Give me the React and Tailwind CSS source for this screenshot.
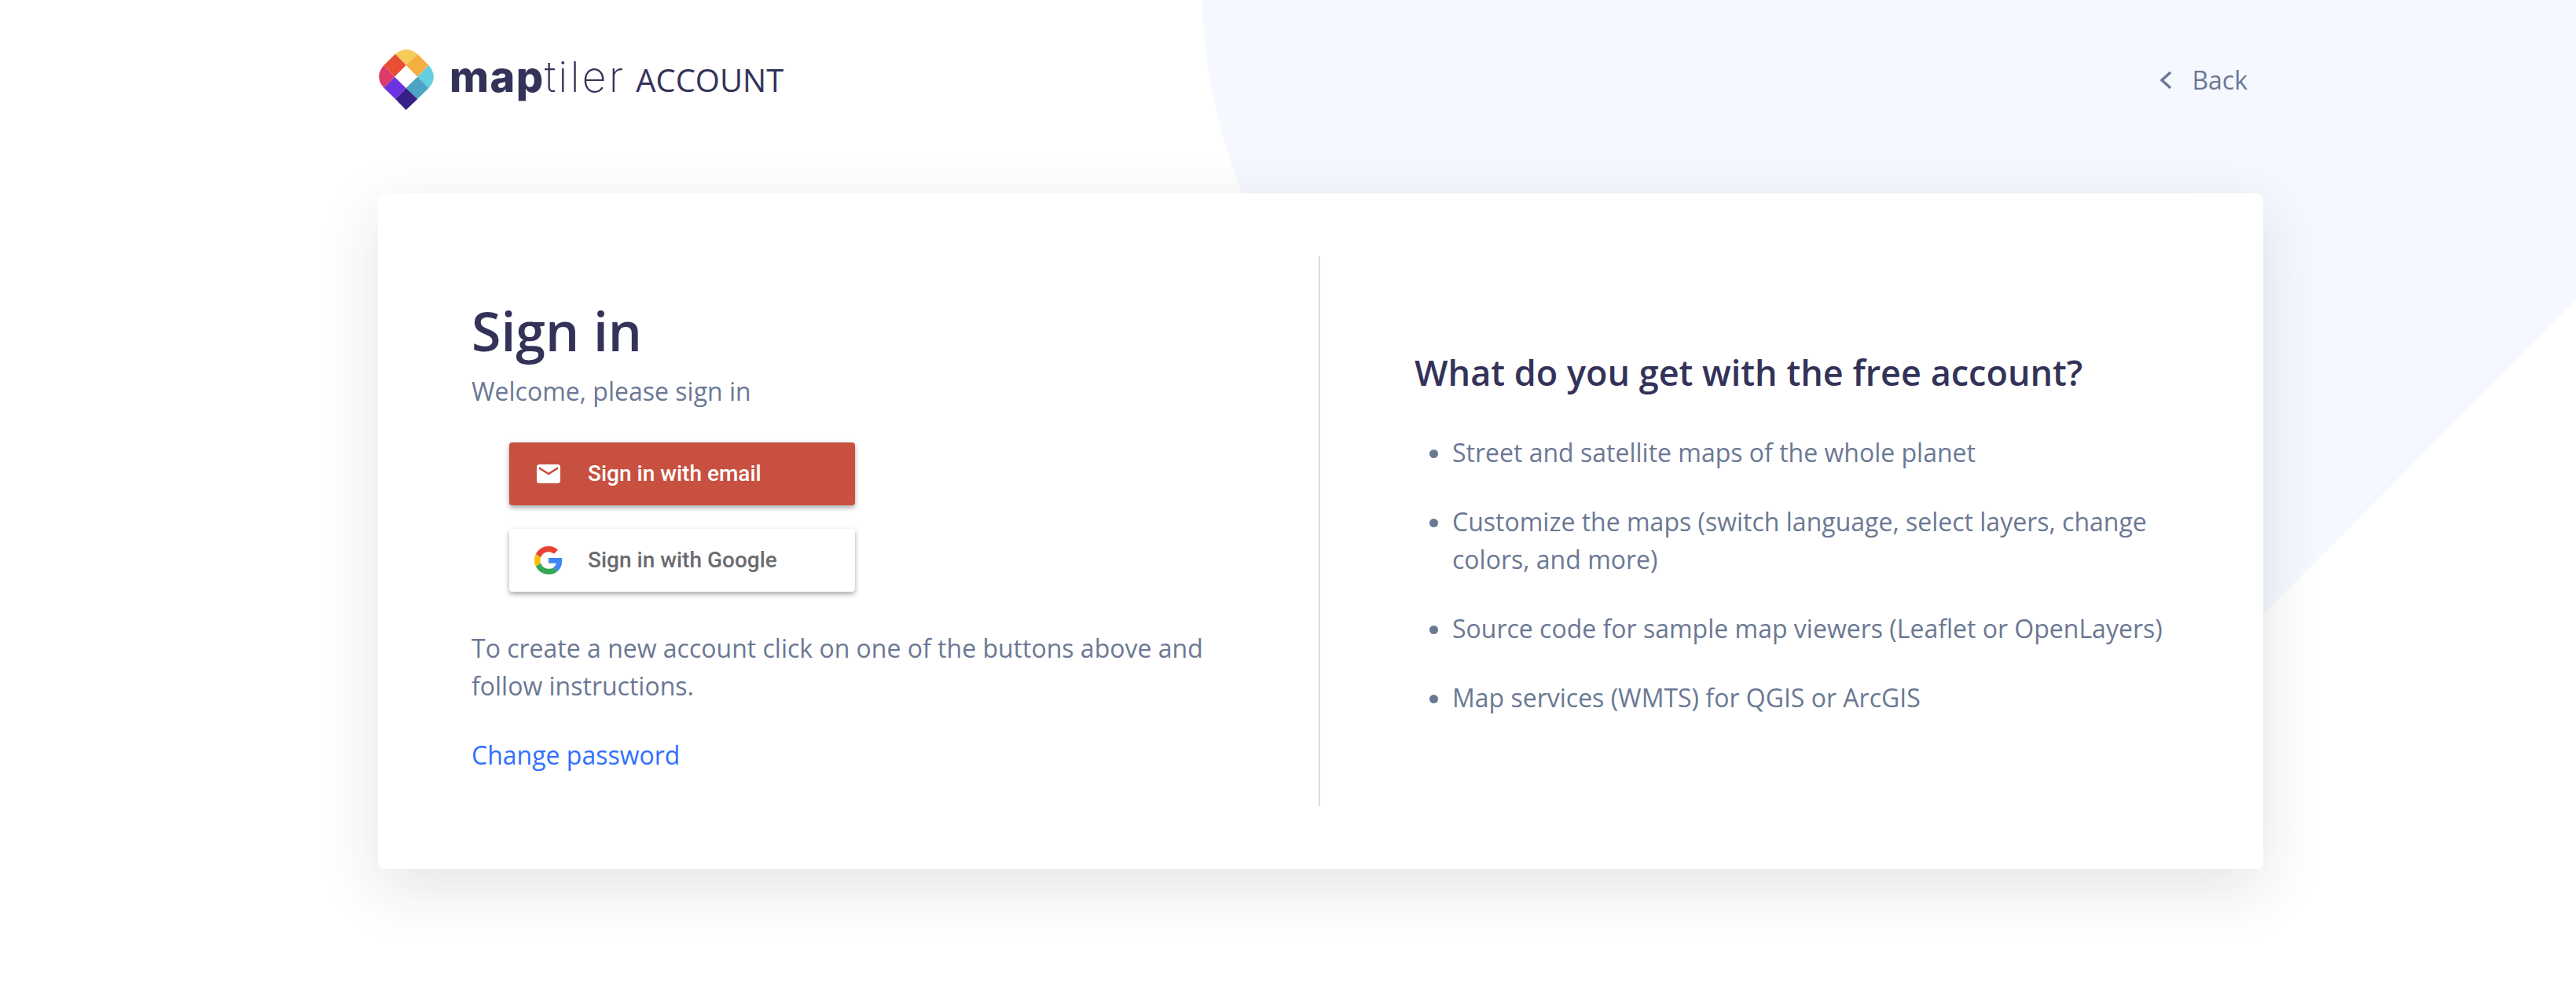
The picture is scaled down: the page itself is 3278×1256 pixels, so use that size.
const benefits = [
  'Street and satellite maps of the whole planet',
  'Customize the maps (switch language, select layers, change colors, and more)',
  'Source code for sample map viewers (Leaflet or OpenLayers)',
  'Map services (WMTS) for QGIS or ArcGIS',
]

function LogoMark() {
  return (
    <svg width="70" height="77" viewBox="37 40 210 232" className="shrink-0">
      <path d="M141 100 L100 57 Q141 23 185 57 Z" fill="#f5cb5a" />
      <path d="M141 100 L185 57 L228 100 L185 145 Z" fill="#f5ae42" />
      <path d="M185 145 L228 100 Q266 145 228 188 Z" fill="#64cfdf" />
      <path d="M185 145 L228 188 L185 230 L141 188 Z" fill="#4da3c2" />
      <path d="M141 188 L185 230 L141 272 L100 230 Z" fill="#371f88" />
      <path d="M97 145 L141 188 L100 230 L56 187 Z" fill="#6b33e0" />
      <path d="M97 145 L56 100 Q18 145 56 187 Z" fill="#dc3a68" />
      <path d="M97 145 L141 100 L100 57 L56 100 Z" fill="#e84e33" />
    </svg>
  )
}

function GoogleIcon() {
  return (
    <svg width="36" height="36" viewBox="0 0 48 48">
      <path fill="#EA4335" d="M24 9.5c3.54 0 6.71 1.22 9.21 3.6l6.85-6.85C35.9 2.38 30.47 0 24 0 14.62 0 6.51 5.38 2.56 13.22l7.98 6.19C12.43 13.72 17.74 9.5 24 9.5z" />
      <path fill="#4285F4" d="M46.98 24.55c0-1.57-.15-3.09-.38-4.55H24v9.02h12.94c-.58 2.96-2.26 5.48-4.78 7.18l7.73 6c4.51-4.18 7.09-10.36 7.09-17.65z" />
      <path fill="#FBBC05" d="M10.53 28.59c-.48-1.45-.76-2.99-.76-4.59s.27-3.14.76-4.59l-7.98-6.19C.92 16.46 0 20.12 0 24c0 3.88.92 7.54 2.56 10.78l7.97-6.19z" />
      <path fill="#34A853" d="M24 48c6.48 0 11.93-2.13 15.89-5.81l-7.73-6c-2.15 1.45-4.92 2.3-8.16 2.3-6.26 0-11.57-4.22-13.47-9.91l-7.98 6.19C6.51 42.62 14.62 48 24 48z" />
    </svg>
  )
}

export default function App() {
  return (
    <div className="relative h-[1256px] overflow-hidden bg-white font-['Open_Sans',sans-serif] text-[32px] leading-[48px] text-[#6b7894]">
      {/* Background shape */}
      <svg className="absolute inset-0" width="3278" height="1256" viewBox="0 0 3278 1256">
        <path d="M1530 0 C1532 90 1552 175 1581 246 L1800 800 L2880 782 L3278 381 L3278 0 Z" fill="#f5f8ff" />
      </svg>

      <div className="relative ml-[481px] w-[2399px]">
        {/* Header */}
        <header className="flex h-[246px] items-start justify-between pt-[62px]">
          <div className="ml-[1px] flex items-center">
            <LogoMark />
            <div className="-mt-[2px] ml-[20px] flex items-baseline text-[#333359]">
              <span className="font-['Inter',sans-serif] text-[54px] font-extrabold leading-[76px] tracking-[1.5px]">map</span>
              <span className="font-['Inter',sans-serif] text-[54px] font-extralight leading-[76px] tracking-[3px]">tiler</span>
              <span className="ml-[13px] text-[40px] leading-[76px]">ACCOUNT</span>
            </div>
          </div>
          <a className="mr-[20px] mt-[16px] flex items-center">
            <svg width="16" height="24" viewBox="0 0 16 24" fill="none" stroke="#6b7894" strokeWidth="3.5" className="mr-[25px]">
              <path d="M14 2 L3 12 L14 22" />
            </svg>
            Back
          </a>
        </header>

        {/* Card */}
        <main className="flex h-[860px] rounded-lg bg-white py-[80px] shadow-[0_24px_80px_rgba(30,30,60,0.12)]">
          <section className="flex w-[1199px] flex-col justify-center border-r-2 border-[#d9dce3] pl-[119px] pr-[140px]">
            <h1 className="text-[68px] font-semibold leading-[106px] text-[#333359]">Sign in</h1>
            <p>Welcome, please sign in</p>
            <div className="mt-[41px] flex flex-col gap-[30px] pl-[48px]">
              <button className="flex h-[80px] w-[440px] items-center rounded-[4px] bg-[#c75040] font-['Roboto',sans-serif] text-[28px] font-medium text-white shadow-[0_3px_6px_rgba(0,0,0,0.35)]">
                <svg width="36" height="36" viewBox="0 0 24 24" fill="#fff" className="ml-[32px] mr-[32px]">
                  <path d="M20 4H4c-1.1 0-1.99.9-1.99 2L2 18c0 1.1.9 2 2 2h16c1.1 0 2-.9 2-2V6c0-1.1-.9-2-2-2zm0 4l-8 5-8-5V6l8 5 8-5v2z" />
                </svg>
                Sign in with email
              </button>
              <button className="flex h-[80px] w-[440px] items-center rounded-[4px] bg-white font-['Roboto',sans-serif] text-[28px] font-medium text-[#6b6b6f] shadow-[0_3px_6px_rgba(0,0,0,0.35)]">
                <span className="ml-[32px] mr-[32px] flex">
                  <GoogleIcon />
                </span>
                Sign in with Google
              </button>
            </div>
            <p className="mt-[48px]">To create a new account click on one of the buttons above and follow instructions.</p>
            <a className="mt-[40px] text-[#3170fe]">Change password</a>
          </section>

          <section className="flex flex-1 flex-col justify-center pl-[120px] pr-[120px] pt-[4px]">
            <h2 className="text-[45px] font-semibold leading-[60px] text-[#333359]">What do you get with the free account?</h2>
            <ul className="mt-[48px] list-disc pl-[48px] marker:text-[#6b7894]">
              {benefits.map((item) => (
                <li key={item} className="mb-[40px] last:mb-0">{item}</li>
              ))}
            </ul>
          </section>
        </main>
      </div>
    </div>
  )
}
